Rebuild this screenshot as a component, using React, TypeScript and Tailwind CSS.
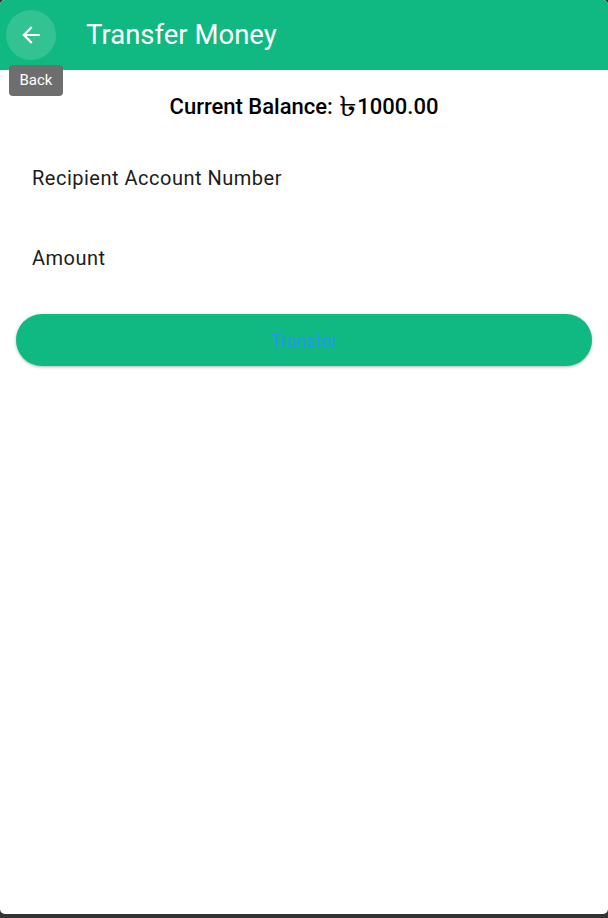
import React from 'react';

const font = { fontFamily: 'Roboto, "Noto Sans", sans-serif' };

export default function App() {
  return (
    <div className="w-[608px] h-[918px] bg-[#333333] overflow-hidden" style={font}>
      <div className="relative flex h-[914px] flex-col overflow-hidden rounded-[5px] bg-white">
        {/* App bar */}
        <header className="relative flex h-[70px] shrink-0 items-center bg-[#10b981]">
          <button className="ml-[6px] flex h-[50px] w-[50px] items-center justify-center rounded-full bg-white/15">
            <svg width="26" height="26" viewBox="0 0 24 24" fill="white">
              <path d="M20 11H7.83l5.59-5.59L12 4l-8 8 8 8 1.41-1.41L7.83 13H20v-2z" />
            </svg>
          </button>
          <h1 className="ml-[30px] text-[27.5px] leading-none text-white">Transfer Money</h1>
          <div className="absolute left-[9px] top-[65px] z-10 flex h-[31px] w-[54px] items-center justify-center rounded-[4px] bg-[#6e6e6e] text-[15px] text-white">
            Back
          </div>
        </header>

        <div className="flex flex-col px-[16px]">
          <p className="mt-[24px] text-center text-[22px] font-medium leading-[26px] text-black">
            Current Balance: <span className="inline-block scale-x-[1.6] scale-y-[1.25] px-[4px]">৳</span>1000.00
          </p>

          <div className="mt-[34px] flex h-[48px] items-center px-[16px]">
            <span className="text-[20px] tracking-[0.5px] text-[#1d1b20]">Recipient Account Number</span>
          </div>
          <div className="mt-[32px] flex h-[48px] items-center px-[16px]">
            <span className="text-[20px] tracking-[0.5px] text-[#1d1b20]">Amount</span>
          </div>

          <button className="mt-[32px] flex h-[52px] w-full items-center justify-center rounded-full bg-[#10b981] text-[18px] text-[#2196f3] shadow-[0_1px_3px_rgba(0,0,0,0.3)]">
            Transfer
          </button>
        </div>
      </div>
    </div>
  );
}
